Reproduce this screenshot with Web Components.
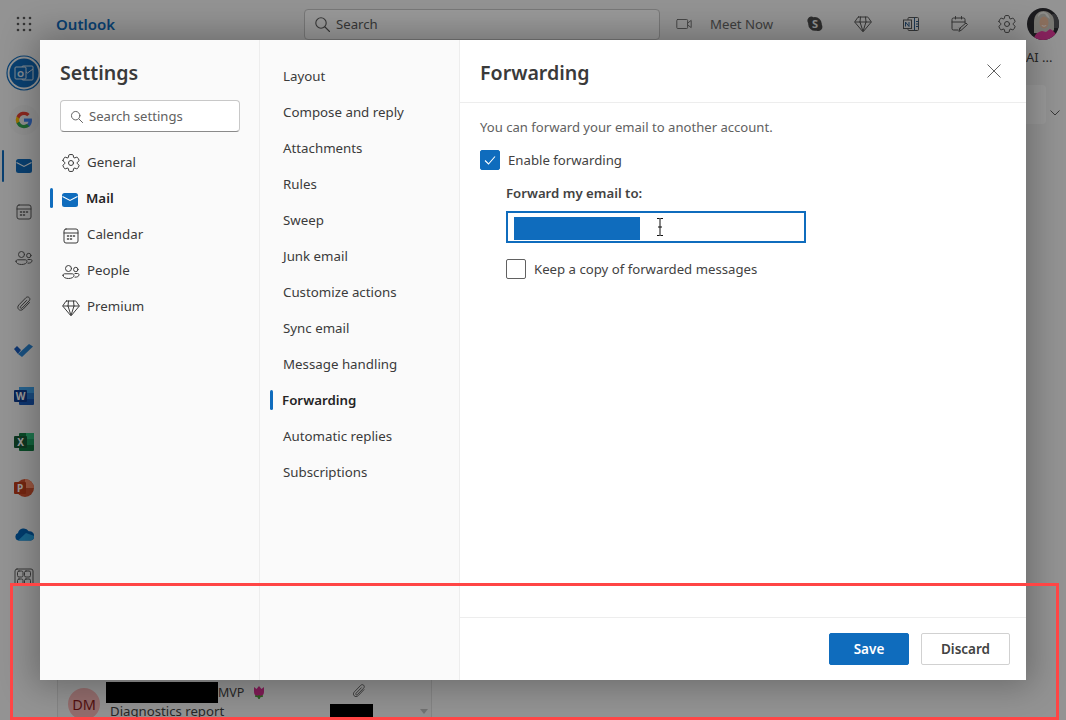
<!DOCTYPE html>
<html>
<head>
<meta charset="utf-8">
<title>Outlook settings</title>
<style>
  html, body { margin: 0; height: 100%; overflow: hidden; }
  body { font-family: "Noto Sans", "Open Sans", sans-serif; font-size: 13.2px; color: #242424; }
</style>
</head>
<body>
<ol-page></ol-page>
<script>
const ICONS = {
  search: '<circle cx="7" cy="7" r="5.2"/><path d="M11 11l4.5 4.5"/>',
  gear: '<path d="M1.91 7.38A8.5 8.5 0 0 1 3.7 4.3a.5.5 0 0 1 .54-.13l1.92.68a1 1 0 0 0 1.32-.76l.36-2a.5.5 0 0 1 .4-.4 8.53 8.53 0 0 1 3.55 0c.2.04.35.2.38.4l.37 2a1 1 0 0 0 1.32.76l1.92-.68a.5.5 0 0 1 .54.13 8.5 8.5 0 0 1 1.78 3.08c.06.2 0 .4-.15.54l-1.56 1.32a1 1 0 0 0 0 1.52l1.56 1.32a.5.5 0 0 1 .15.54 8.5 8.5 0 0 1-1.78 3.08.5.5 0 0 1-.54.13l-1.92-.68a1 1 0 0 0-1.32.76l-.37 2a.5.5 0 0 1-.38.4 8.53 8.53 0 0 1-3.56 0 .5.5 0 0 1-.39-.4l-.36-2a1 1 0 0 0-1.32-.76l-1.92.68a.5.5 0 0 1-.54-.13 8.5 8.5 0 0 1-1.78-3.08.5.5 0 0 1 .15-.54l1.56-1.32a1 1 0 0 0 0-1.52L2.06 7.92a.5.5 0 0 1-.15-.54z"/><circle cx="10" cy="10" r="2.500"/>',
  calendar: '<rect x="3" y="3" width="14" height="14" rx="2"/><path d="M3 7h14"/><path d="M6.500 10h1M9.500 10h1M12.500 10h1M6.500 13h1M9.500 13h1" stroke-width="1.500"/>',
  people: '<circle cx="7.500" cy="6.500" r="3"/><circle cx="14.800" cy="7.500" r="2.200"/><path d="M2 13.300c0-1 .8-1.500 1.700-1.500h7.600c.9 0 1.700.5 1.700 1.500 0 2-2.400 3.200-5.500 3.200S2 15.300 2 13.300z"/><path d="M14 11.500h2.500c1 0 1.500.6 1.500 1.300 0 1.500-1.700 2.500-4 2.400"/>',
  diamond: '<path d="M5.500 3h9c.3 0 .5.1.7.4L18 7.500c.2.3.2.6 0 .9l-7.400 8.800c-.3.4-.9.4-1.200 0L2 8.400c-.2-.3-.2-.6 0-.9l2.800-4.100c.2-.3.4-.4.700-.4z"/><path d="M2 8h16M7 8l3 9.500L13 8M7.500 3L7 8M12.500 3L13 8"/>',
  clip: '<path d="M15.500 8.500l-6.300 6.600c-1.500 1.500-3.500 1.400-4.600.2-1.100-1.100-1.100-3 .3-4.400l7-7.200c1-1 2.400-1 3.300-.1.900.9.900 2.300-.1 3.300l-6.900 7.100c-.5.500-1.200.5-1.600.1-.4-.4-.4-1.100.1-1.600l5.800-6"/>',
  video: '<rect x="2" y="5" width="12" height="10" rx="1"/><path d="M14 9l4-3v8l-4-3"/>',
  tasks: '<path d="M9 16H4.500A1.500 1.500 0 0 1 3 14.500v-9A1.500 1.500 0 0 1 4.500 4h10A1.500 1.500 0 0 1 16 5.500V9"/><path d="M3 8h13M6.500 2.500V5M12.500 2.500V5"/><path d="M10 17l1-3 6-5 1.500 1.500-6 5.500zM10.500 14l1 1"/>',
  apps: '<rect x="1" y="1" width="18" height="22" rx="2"/><rect x="3.500" y="3" width="5.500" height="6" rx="1.500"/><rect x="10.500" y="3" width="6" height="6" rx="1.500"/><rect x="3.500" y="11" width="5.500" height="6" rx="1.500"/><rect x="10.500" y="11" width="6" height="6" rx="1.500"/>'
};

// line icon from the table above, or a filled mail glyph
class OlIcon extends HTMLElement {
  connectedCallback() {
    const name = this.getAttribute('name');
    const size = this.getAttribute('size') || 20;
    const vb = name === 'search' ? '0 0 16 16' : '0 0 20 20';
    const sw = this.getAttribute('stroke') || (name === 'search' ? 1.1 : 1);
    const body = name === 'mail'
      ? '<rect x="2" y="3" width="16" height="14" rx="2.500" fill="currentColor"/><path d="M2.500 6.500L10 10.500l7.500-4" fill="none" stroke="#fff" stroke-width="1.100"/>'
      : `<g fill="none" stroke="currentColor" stroke-width="${sw}" stroke-linejoin="round" stroke-linecap="round">${ICONS[name]}</g>`;
    this.attachShadow({ mode: 'open' }).innerHTML = `
      <style>:host { display: inline-flex; flex: none; } svg { display: block; }</style>
      <svg width="${size}" height="${size}" viewBox="${vb}">${body}</svg>`;
  }
}
customElements.define('ol-icon', OlIcon);

class OlTopbar extends HTMLElement {
  constructor() {
    super();
    const dots = [];
    for (let y = 2; y <= 14; y += 6) for (let x = 2; x <= 14; x += 6) dots.push(`<circle cx="${x}" cy="${y}" r="1.300"/>`);
    this.attachShadow({ mode: 'open' }).innerHTML = `
      <style>
        :host { display: flex; align-items: center; height: 48px; background: #f5f5f5; color: #5a5a5a; box-sizing: border-box; }
        .waffle { margin-left: 16px; width: 16px; height: 16px; }
        .brand { margin-left: 24px; width: 248px; font-size: 15px; font-weight: 600; color: #0f6cbd; }
        .search { width: 356px; height: 31px; box-sizing: border-box; display: flex; align-items: center; gap: 6px; padding-left: 9px;
          background: #fff; border: 1px solid #c8c8c8; border-radius: 4px; color: #5c5c5c; font-size: 13.200px; }
        .meet { display: flex; align-items: center; margin-left: 15px; gap: 17px; width: 130px; color: #6a6a6a; font-size: 13.200px; }
        .tools { display: flex; align-items: center; gap: 28px; }
        .glyph { width: 20px; height: 20px; display: block; }
        .me { width: 32px; height: 32px; border-radius: 50%; margin-left: 10px; display: block; }
      </style>
      <svg class="waffle" viewBox="0 0 16 16" fill="#5a5a5a">${dots.join('')}</svg>
      <div class="brand">Outlook</div>
      <div class="search"><ol-icon name="search" size="16"></ol-icon><span>Search</span></div>
      <div class="meet"><ol-icon name="video" size="18"></ol-icon><span>Meet Now</span></div>
      <div class="tools">
        <svg class="glyph" viewBox="0 0 20 20"><path d="M6 2.500a4 4 0 0 1 2.500.700 7 7 0 0 1 8.300 7.600 4.200 4.200 0 0 1-5.300 5.900 7 7 0 0 1-8.300-7.600A4.200 4.200 0 0 1 6 2.500z" fill="#4e4e4e"/><text x="10" y="14.200" font-size="11" font-weight="700" text-anchor="middle" fill="#f5f5f5">S</text></svg>
        <ol-icon name="diamond"></ol-icon>
        <svg class="glyph" viewBox="0 0 20 20" fill="none" stroke="#5a5a5a"><rect x="7" y="3.500" width="10.500" height="13" rx="1"/><path d="M13.500 3.500v13" stroke="#2f5f90"/><rect x="2.500" y="6" width="8" height="8.500" fill="#f5f5f5"/><path d="M4.500 12.500v-4.500l3.500 4.500v-4.500" stroke="#2f5f90"/><path d="M15 7.500h2.500M15 10h2.500M15 12.500h2.500" stroke="#2f5f90"/></svg>
        <ol-icon name="tasks"></ol-icon>
        <ol-icon name="gear"></ol-icon>
      </div>
      <svg class="me" viewBox="0 0 32 32">
        <rect width="32" height="32" fill="#2e2e33"/>
        <rect x="25" y="6" width="7" height="14" fill="#55555a"/>
        <path d="M7 25V14C7 7 11 3 16.500 3S27 7 27 14v8l-4 4z" fill="#c9c6bf"/>
        <path d="M11 9c2-3 4-4 7-3 1 2 3 4 5 5-1-4-3-7-6.500-7S11 6 11 9z" fill="#ecebe6"/>
        <ellipse cx="17" cy="14.500" rx="4.500" ry="6" fill="#e8b99c"/>
        <path d="M14.500 17c1.500 1 3.500 1 5 0-.8 2-4.200 2-5 0z" fill="#fff"/>
        <path d="M7 32c0-5 3-8 8-9l4 1 4-3c4 2 7 5 8 11z" fill="#e23a9c"/>
      </svg>`;
  }
}
customElements.define('ol-topbar', OlTopbar);

class OlRail extends HTMLElement {
  constructor() {
    super();
    this.attachShadow({ mode: 'open' }).innerHTML = `
      <style>
        :host { display: flex; flex-direction: column; align-items: center; width: 48px; flex: none; color: #5a5a5a; background: #f5f5f5; }
        .item { height: 46px; width: 48px; flex: none; display: flex; align-items: center; justify-content: center; position: relative; }
        .first { height: 49px; }
        .on { color: #0f6cbd; }
        .on::before { content: ""; position: absolute; left: 2px; top: 7px; bottom: 7px; width: 2px; background: #0f6cbd; border-radius: 1px; }
        .last { height: 16px; margin-top: 11px; overflow: hidden; align-items: flex-start; }
        svg { display: block; }
      </style>
      <div class="item first"><svg width="36" height="36" viewBox="0 0 36 36">
        <circle cx="18" cy="18" r="17" fill="none" stroke="#0f6cbd" stroke-width="1.200"/><circle cx="18" cy="18" r="14.500" fill="#0f6cbd"/>
        <rect x="16" y="11" width="11" height="14" rx="1" fill="none" stroke="#dfe8f2"/><path d="M16 14l5.500 4 5.500-4" fill="none" stroke="#dfe8f2"/>
        <rect x="9" y="12" width="11" height="12" rx="1" fill="#0f6cbd" stroke="#dfe8f2"/><text x="14.500" y="21.500" font-size="9" font-weight="700" text-anchor="middle" fill="#dfe8f2">O</text></svg></div>
      <div class="item"><svg width="30" height="30" viewBox="0 0 30 30"><circle cx="15" cy="15" r="15" fill="#f0f0f0"/>
        <path d="M23 15.200c0-.6-.1-1.200-.2-1.700H15v3.300h4.500a3.900 3.900 0 0 1-1.700 2.500v2.100h2.700c1.600-1.500 2.500-3.600 2.500-6.200z" fill="#4285f4"/>
        <path d="M15 23.200c2.200 0 4.100-.7 5.500-2l-2.700-2.100c-.7.500-1.700.8-2.800.8-2.200 0-4-1.500-4.600-3.400H7.600v2.100a8.200 8.200 0 0 0 7.400 4.600z" fill="#34a853"/>
        <path d="M10.400 16.500a5 5 0 0 1 0-3.100v-2.100H7.600a8.200 8.200 0 0 0 0 7.300z" fill="#fbbc05"/>
        <path d="M15 10.100c1.200 0 2.300.4 3.200 1.200l2.400-2.400A8.200 8.200 0 0 0 7.600 11.300l2.800 2.100c.6-1.900 2.400-3.300 4.600-3.300z" fill="#ea4335"/></svg></div>
      <div class="item on"><ol-icon name="mail" size="20"></ol-icon></div>
      <div class="item"><ol-icon name="calendar"></ol-icon></div>
      <div class="item"><ol-icon name="people"></ol-icon></div>
      <div class="item"><ol-icon name="clip"></ol-icon></div>
      <div class="item"><svg width="20" height="20" viewBox="0 0 20 20"><path d="M0 9l3-3 4 4-3 4z" fill="#185abd"/><path d="M4 14L15 4l4 2.500L8 17z" fill="#2b88d8"/></svg></div>
      <div class="item"><svg width="20" height="20" viewBox="0 0 20 20"><rect x="5" y="1" width="15" height="18" rx="1" fill="#185abd"/><rect x="5" y="1" width="15" height="6" fill="#41a5ee"/><rect x="5" y="7" width="15" height="6" fill="#2b7cd3"/><rect y="4" width="13" height="12" rx="1" fill="#103f91"/><text x="6.500" y="13.500" font-size="10" font-weight="700" text-anchor="middle" fill="#fff">W</text></svg></div>
      <div class="item"><svg width="20" height="20" viewBox="0 0 20 20"><rect x="5" y="1" width="15" height="18" rx="1" fill="#107c41"/><rect x="12" y="1" width="8" height="6" fill="#33c481"/><rect x="12" y="7" width="8" height="6" fill="#21a366"/><rect y="4" width="13" height="12" rx="1" fill="#185c37"/><text x="6.500" y="13.500" font-size="10" font-weight="700" text-anchor="middle" fill="#fff">X</text></svg></div>
      <div class="item"><svg width="20" height="20" viewBox="0 0 20 20"><circle cx="11" cy="10" r="9" fill="#d35230"/><path d="M11 1a9 9 0 0 1 9 9h-9z" fill="#ff8f6b"/><rect y="4" width="12" height="12" rx="1" fill="#c43e1c"/><text x="6" y="13.500" font-size="10" font-weight="700" text-anchor="middle" fill="#fff">P</text></svg></div>
      <div class="item"><svg width="20" height="14" viewBox="0 0 20 14"><path d="M5 13.500a3.800 3.800 0 0 1-1-7.400 5.800 5.800 0 0 1 10.700-1.800A4.500 4.500 0 0 1 20 9.500a4 4 0 0 1-3 4z" fill="#0364b8"/><path d="M4 13.500h12.500a3.500 3.500 0 0 0 3.300-4.700L12 6z" fill="#28a8ea"/></svg></div>
      <div class="item last"><ol-icon name="apps"></ol-icon></div>`;
  }
}
customElements.define('ol-rail', OlRail);

// the mail list and reading pane that show around the dialog
class OlMailBehind extends HTMLElement {
  constructor() {
    super();
    this.attachShadow({ mode: 'open' }).innerHTML = `
      <style>
        :host { display: flex; flex: 1; min-width: 0; background: #f5f5f5; overflow: hidden; }
        .list { width: 375px; margin-left: 9px; flex: none; align-self: flex-end; height: 60px; box-sizing: border-box; background: #f2f2f2; border: 1px solid #dcdcdc; border-bottom: 0; position: relative; overflow: hidden; }
        .row { position: absolute; left: 0; right: 0; top: 21px; display: grid; grid-template-columns: 32px 1fr 30px; column-gap: 6px; padding-left: 10px; }
        .avatar { width: 32px; height: 32px; border-radius: 50%; margin-top: 6px; background: #f4b4b4; color: #8a1c1c; display: flex; align-items: center; justify-content: center; font-size: 14.500px; }
        .from { display: flex; align-items: center; height: 21px; font-size: 12.500px; color: #424242; }
        .mask { background: #000; }
        .from .mask { width: 112px; height: 21px; }
        .subject { font-size: 13.200px; color: #424242; white-space: nowrap; margin-left: 4px; margin-top: -1px; }
        .tulip { margin-left: 9px; display: block; }
        .stamp { position: absolute; left: 272px; bottom: 0; width: 43px; height: 16px; background: #000; }
        .clip { position: absolute; left: 292px; top: 21px; color: #5a5a5a; }
        .arrow { position: absolute; right: 3px; bottom: 6px; width: 0; height: 0; border: 4px solid transparent; border-top: 5px solid #bdbdbd; border-bottom: 0; }
        .side { flex: 1; position: relative; }
        .ai { position: absolute; left: 594px; top: 0; font-size: 13px; color: #424242; white-space: nowrap; }
        .card { position: absolute; left: 594px; top: 37px; width: 20px; height: 39px; background: #fff; border-radius: 0 4px 4px 0; }
        .chev { position: absolute; left: 618px; top: 62px; display: block; }
      </style>
      <div class="list">
        <div class="row">
          <div class="avatar">DM</div>
          <div>
            <div class="from"><span class="mask"></span><span>MVP</span><svg class="tulip" width="12" height="14" viewBox="0 0 12 14"><path d="M1 1l2.500 2L6 0l2.500 3L11 1v5a5 5 0 0 1-10 0z" fill="#d6308f"/><path d="M6 9v4M2 10c2 0 4 1 4 3 0-2 2-3 4-3" stroke="#4f9d3a" fill="none" stroke-width="1.500"/></svg></div>
            <div class="subject">Diagnostics report</div>
          </div>
        </div>
        <ol-icon class="clip" name="clip" size="18"></ol-icon>
        <div class="stamp"></div>
        <div class="arrow"></div>
      </div>
      <div class="side">
        <div class="ai">AI ...</div>
        <div class="card"></div>
        <svg class="chev" width="10" height="6" viewBox="0 0 10 6" fill="none" stroke="#5c5c5c"><path d="M.5.500L5 5l4.500-4.500"/></svg>
      </div>`;
  }
}
customElements.define('ol-mail-behind', OlMailBehind);

class NavItem extends HTMLElement {
  constructor() {
    super();
    this.attachShadow({ mode: 'open' }).innerHTML = `
      <style>
        :host { display: flex; align-items: center; height: 36px; gap: 6px; position: relative; color: #3b3b3b; font-size: 13.300px; white-space: nowrap; }
        :host([active]) { font-weight: 600; color: #242424; }
        :host([active])::before { content: ""; position: absolute; left: var(--bar-left, -10px); top: 8px; width: 3px; height: 20px; background: #0f6cbd; border-radius: 2px; }
      </style>
      <slot name="icon"></slot><slot></slot>`;
  }
}
customElements.define('nav-item', NavItem);

class CheckField extends HTMLElement {
  constructor() {
    super();
    this.attachShadow({ mode: 'open' }).innerHTML = `
      <style>
        :host { display: flex; align-items: center; gap: 8px; height: 20px; color: #424242; font-size: 13.200px; }
        .box { width: 20px; height: 20px; box-sizing: border-box; border: 1px solid #616161; border-radius: 2px; background: #fff; display: flex; align-items: center; justify-content: center; }
        :host([checked]) .box { background: #0f6cbd; border-color: #0f6cbd; }
        svg { display: none; }
        :host([checked]) svg { display: block; }
      </style>
      <div class="box"><svg width="14" height="14" viewBox="0 0 14 14" fill="none" stroke="#fff" stroke-width="1.100"><path d="M2 7.500L5.500 11 12 3.500"/></svg></div>
      <slot></slot>`;
  }
}
customElements.define('check-field', CheckField);

class OlButton extends HTMLElement {
  constructor() {
    super();
    this.attachShadow({ mode: 'open' }).innerHTML = `
      <style>
        :host { display: flex; align-items: center; justify-content: center; height: 32px; box-sizing: border-box; border-radius: 2px; font-size: 13.500px; font-weight: 600; border: 1px solid #d1d1d1; background: #fff; color: #424242; }
        :host([primary]) { background: #0f6cbd; border-color: #0f6cbd; color: #fff; }
      </style><slot></slot>`;
  }
}
customElements.define('ol-button', OlButton);

class SettingsDialog extends HTMLElement {
  constructor() {
    super();
    const section = ['Layout', 'Compose and reply', 'Attachments', 'Rules', 'Sweep', 'Junk email', 'Customize actions', 'Sync email', 'Message handling', 'Forwarding', 'Automatic replies', 'Subscriptions'];
    this.attachShadow({ mode: 'open' }).innerHTML = `
      <style>
        :host { position: absolute; left: 40px; top: 40px; width: 986px; height: 640px; display: grid; grid-template-columns: 220px 200px 1fr; background: #fff; box-shadow: 0 0 32px 6px rgba(0,0,0,.28); }
        h2 { margin: 0; font-size: 19.600px; font-weight: 600; color: #3a3a3a; line-height: 28px; }
        .col1 { background: #fafafa; border-right: 1px solid #ededed; padding: 19px 19px 0 20px; }
        .find { margin-top: 13px; height: 32px; box-sizing: border-box; display: flex; align-items: center; gap: 6px; padding-left: 9px; background: #fff; border: 1px solid #c8c8c8; border-bottom-color: #8a8a8a; border-radius: 4px; color: #616161; font-size: 13.100px; margin-bottom: 12px; }
        .col1 ol-icon { margin-top: 4px; margin-left: 1px; }
        .col1 ol-icon.gear { margin-top: 2px; }
        .col1 ol-icon.mail { margin-left: 0; }
        .find ol-icon { margin: 0; }
        .col2 { background: #fafafa; border-right: 1px solid #ededed; padding: 18px 0 0 23px; --bar-left: -12px; }
        .col2 nav-item[active] { margin-left: -1px; }
        .pane { display: flex; flex-direction: column; min-width: 0; }
        .head { height: 63px; flex: none; box-sizing: border-box; border-bottom: 1px solid #ededed; padding: 19px 25px 0 20px; display: flex; justify-content: space-between; }
        .close { margin-top: 5px; display: block; }
        .body { flex: 1; padding: 14px 20px 0; }
        .lead { height: 20px; line-height: 20px; color: #616161; font-size: 13.100px; margin-bottom: 13px; }
        .sub { margin-left: 26px; }
        label { display: block; margin-top: 13px; height: 20px; line-height: 20px; font-size: 13.200px; font-weight: 600; color: #424242; }
        .to { margin-top: 8px; width: 300px; height: 32px; box-sizing: border-box; border: 2px solid #0f6cbd; background: #fff; padding: 4px 6px; display: flex; align-items: stretch; gap: 16px; }
        .picked { width: 126px; background: #0f6cbd; height: 23px; }
        .beam { display: block; margin-top: 1px; }
        .sub check-field { margin-top: 16px; }
        .foot { height: 63px; flex: none; box-sizing: border-box; border-top: 1px solid #ededed; padding: 15px 16px 0 0; display: flex; justify-content: flex-end; gap: 12px; }
        .foot ol-button:first-child { width: 80px; }
        .foot ol-button:last-child { width: 89px; }
      </style>
      <section class="col1">
        <h2>Settings</h2>
        <div class="find"><ol-icon name="search" size="13" stroke="1.200"></ol-icon><span>Search settings</span></div>
        <nav-item><ol-icon slot="icon" class="gear" name="gear"></ol-icon>General</nav-item>
        <nav-item active><ol-icon slot="icon" class="mail" name="mail" style="color:#0f6cbd"></ol-icon>Mail</nav-item>
        <nav-item><ol-icon slot="icon" name="calendar"></ol-icon>Calendar</nav-item>
        <nav-item><ol-icon slot="icon" name="people"></ol-icon>People</nav-item>
        <nav-item><ol-icon slot="icon" name="diamond"></ol-icon>Premium</nav-item>
      </section>
      <section class="col2">
        ${section.map(s => `<nav-item${s === 'Forwarding' ? ' active' : ''}>${s}</nav-item>`).join('')}
      </section>
      <section class="pane">
        <header class="head"><h2>Forwarding</h2>
          <svg class="close" width="14" height="14" viewBox="0 0 14 14" stroke="#616161" fill="none"><path d="M.5.500l13 13M13.500.500l-13 13"/></svg></header>
        <div class="body">
          <div class="lead">You can forward your email to another account.</div>
          <check-field checked>Enable forwarding</check-field>
          <div class="sub">
            <label>Forward my email to:</label>
            <div class="to"><div class="picked"></div>
              <svg class="beam" width="8" height="18" viewBox="0 0 8 18" fill="none" stroke="#111"><path d="M1 .500h2.500L4 1l.500-.500H7M4 1v16M1 17.500h2.500L4 17l.500.500H7M2 9h4"/></svg></div>
            <check-field>Keep a copy of forwarded messages</check-field>
          </div>
        </div>
        <footer class="foot"><ol-button primary>Save</ol-button><ol-button>Discard</ol-button></footer>
      </section>`;
  }
}
customElements.define('settings-dialog', SettingsDialog);

class OlPage extends HTMLElement {
  constructor() {
    super();
    this.attachShadow({ mode: 'open' }).innerHTML = `
      <style>
        :host { display: flex; flex-direction: column; width: 1066px; height: 720px; position: relative; overflow: hidden; }
        .work { display: flex; flex: 1; min-height: 0; }
        .scrim { position: absolute; inset: 0; background: rgba(0,0,0,.4); }
        .markup { position: absolute; left: 10px; top: 583px; width: 1049px; height: 137px; box-sizing: border-box; border: 3px solid #ff4545; }
      </style>
      <ol-topbar></ol-topbar>
      <div class="work"><ol-rail></ol-rail><ol-mail-behind></ol-mail-behind></div>
      <div class="scrim"></div>
      <settings-dialog></settings-dialog>
      <div class="markup"></div>`;
  }
}
customElements.define('ol-page', OlPage);
</script>
</body>
</html>
